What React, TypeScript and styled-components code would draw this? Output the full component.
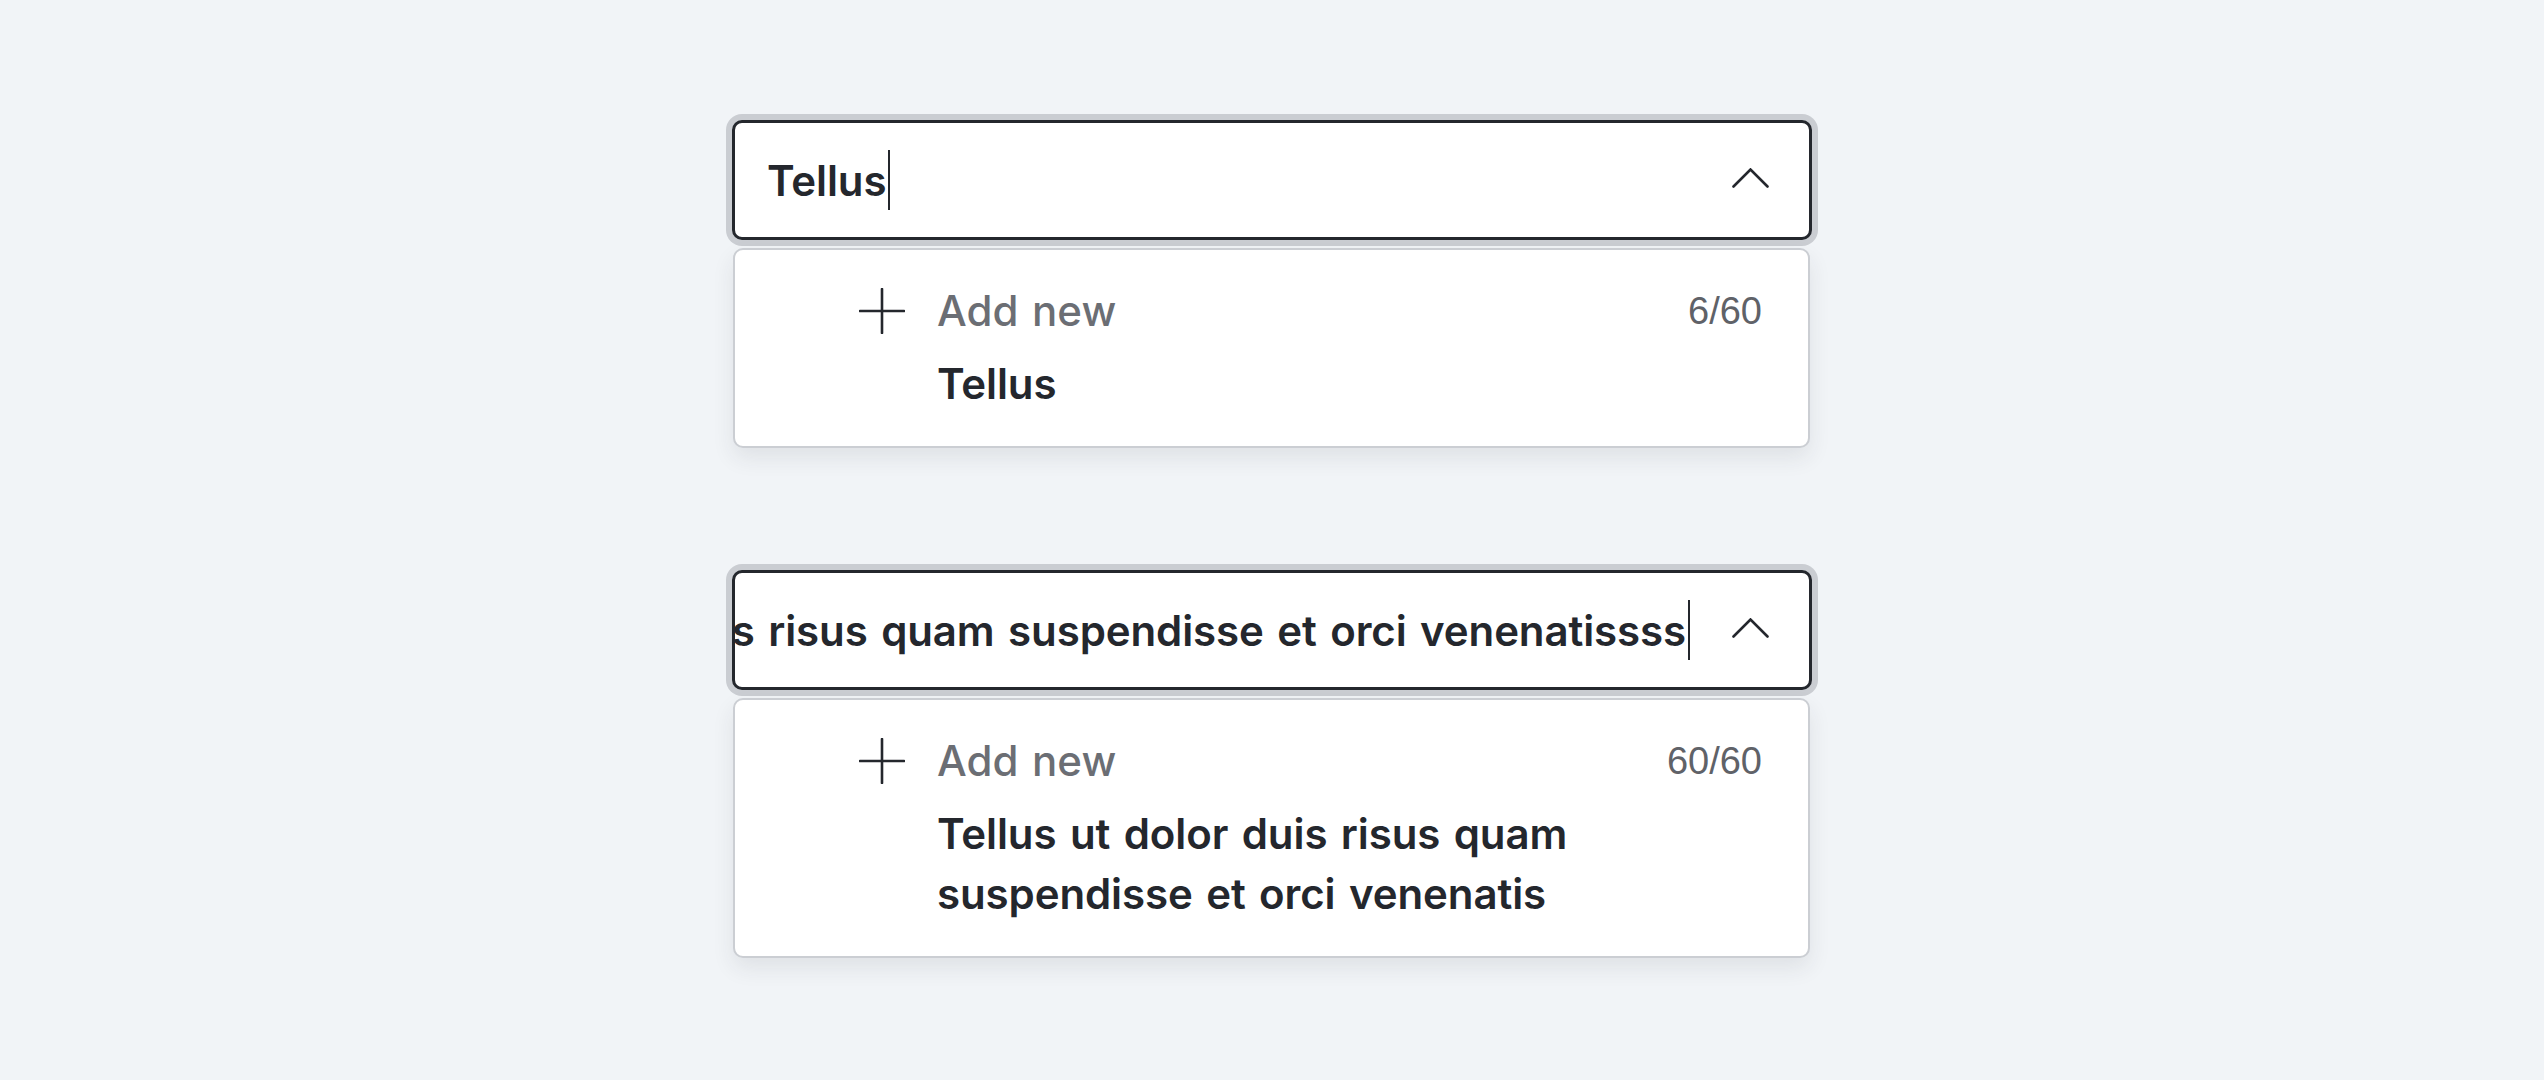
import React from "react";
import styled, { createGlobalStyle } from "styled-components";

const GlobalStyle = createGlobalStyle`
  html, body {
    margin: 0;
    padding: 0;
    background: #f1f4f7;
  }
  body {
    font-family: Inter, "Noto Sans", sans-serif;
    color: #24272d;
  }
`;

const Page = styled.main`
  min-height: 1080px;
  box-sizing: border-box;
  padding-top: 120px;
  display: flex;
  flex-direction: column;
  align-items: center;
  gap: 122px;
`;

const Combo = styled.section`
  width: 1080px;
  display: flex;
  flex-direction: column;
  gap: 8px;
`;

const Field = styled.div`
  box-sizing: border-box;
  height: 120px;
  border: 3px solid #24272d;
  border-radius: 10px;
  background: #ffffff;
  box-shadow: 0 0 0 6px #cacdd2;
  display: flex;
  align-items: center;
  padding-right: 40px;
  gap: 42px;
  overflow: hidden;
`;

const Viewport = styled.div<{ $scrolled?: boolean }>`
  flex: 1;
  min-width: 0;
  height: 100%;
  display: flex;
  align-items: center;
  justify-content: ${(p) => (p.$scrolled ? "flex-end" : "flex-start")};
  padding-left: ${(p) => (p.$scrolled ? "0" : "32px")};
  overflow: hidden;
`;

const Value = styled.span`
  flex: none;
  white-space: nowrap;
  font-size: 42px;
  font-weight: 600;
  letter-spacing: -0.1px;
  word-spacing: 3px;
  color: #24272d;
`;

const Caret = styled.span`
  flex: none;
  width: 2px;
  height: 60px;
  margin-left: 2px;
  background: #24272d;
`;

const ChevronButton = styled.span`
  flex: none;
  width: 37px;
  height: 20px;
  display: flex;
  align-items: center;
  justify-content: center;
  margin-top: -4px;
`;

const Menu = styled.div`
  box-sizing: border-box;
  margin: 0 2px 0 1px;
  background: #ffffff;
  border: 2px solid #cbced3;
  border-radius: 10px;
  box-shadow: 0 10px 22px rgba(40, 46, 60, 0.09);
  padding: 31px 46px 32px 124px;
  display: grid;
  grid-template-columns: 46px 1fr auto;
  column-gap: 32px;
  row-gap: 13px;
  align-items: center;
`;

const PlusIcon = styled.span`
  width: 46px;
  height: 46px;
  display: flex;
`;

const AddLabel = styled.span`
  font-size: 42px;
  line-height: 60px;
  font-weight: 500;
  letter-spacing: 0.1px;
  word-spacing: 2px;
  color: #6b6e74;
`;

const Counter = styled.span`
  font-family: "Liberation Sans", Arial, sans-serif;
  font-size: 38px;
  line-height: 60px;
  color: #5f6268;
`;

const Option = styled.div`
  grid-column: 2 / 4;
  font-size: 42px;
  line-height: 60px;
  font-weight: 600;
  letter-spacing: -0.1px;
  word-spacing: 3px;
  color: #24272d;
  padding-right: 160px;
`;

const Chevron = () => (
  <svg width="37" height="20" viewBox="0 0 37 20" fill="none">
    <polyline
      points="1.5,18.5 18.5,1.5 35.5,18.5"
      stroke="#24272d"
      strokeWidth="2.6"
      strokeLinecap="round"
      strokeLinejoin="miter"
    />
  </svg>
);

const Plus = () => (
  <svg width="46" height="46" viewBox="0 0 46 46" fill="none">
    <line x1="23" y1="1" x2="23" y2="45" stroke="#24272d" strokeWidth="2.6" strokeLinecap="round" />
    <line x1="1" y1="23" x2="45" y2="23" stroke="#24272d" strokeWidth="2.6" strokeLinecap="round" />
  </svg>
);

type ComboProps = {
  value: string;
  scrolled?: boolean;
  count: string;
  option: string;
};

const ComboBox = ({ value, scrolled, count, option }: ComboProps) => (
  <Combo>
    <Field>
      <Viewport $scrolled={scrolled}>
        <Value>{value}</Value>
        <Caret />
      </Viewport>
      <ChevronButton>
        <Chevron />
      </ChevronButton>
    </Field>
    <Menu>
      <PlusIcon>
        <Plus />
      </PlusIcon>
      <AddLabel>Add new</AddLabel>
      <Counter>{count}</Counter>
      <Option>{option}</Option>
    </Menu>
  </Combo>
);

export default function App() {
  return (
    <>
      <GlobalStyle />
      <Page>
        <ComboBox value="Tellus" count="6/60" option="Tellus" />
        <ComboBox
          value="Tellus ut dolor duis risus quam suspendisse et orci venenatissss"
          scrolled
          count="60/60"
          option="Tellus ut dolor duis risus quam suspendisse et orci venenatis"
        />
      </Page>
    </>
  );
}
